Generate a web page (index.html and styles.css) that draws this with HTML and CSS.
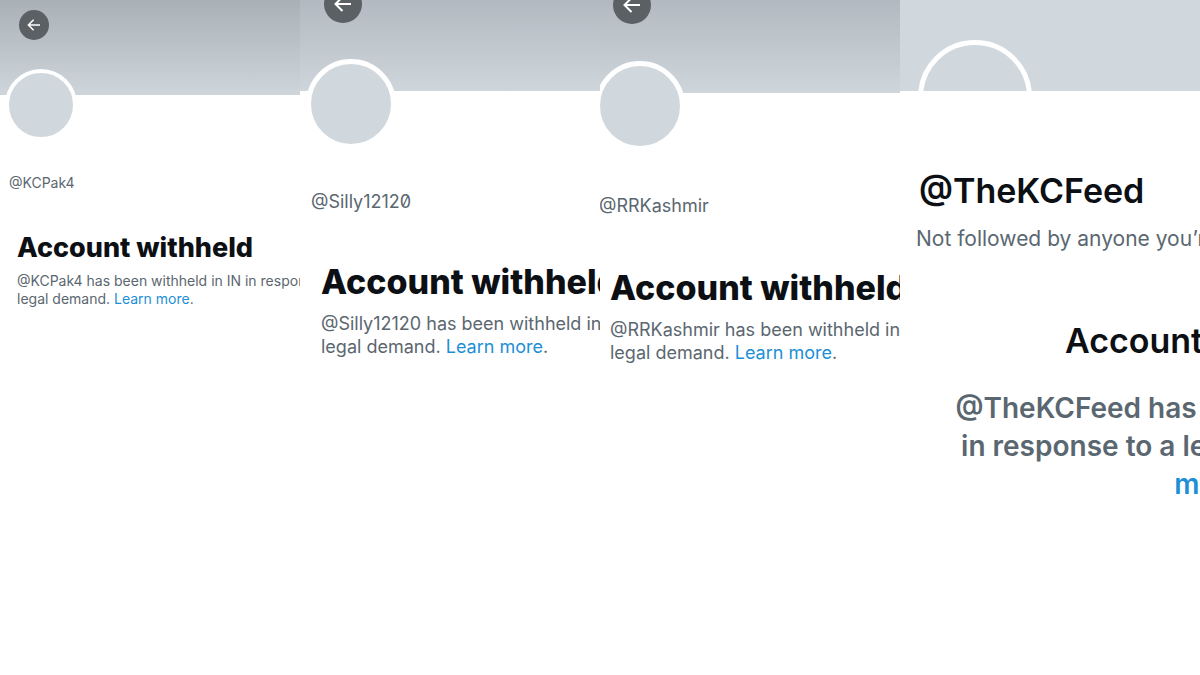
FILE: index.html
```html
<!DOCTYPE html>
<html lang="en">
<head>
  <meta charset="UTF-8">
  <meta name="viewport" content="width=device-width, initial-scale=1">
  <title>Withheld accounts</title>
  <link rel="stylesheet" href="styles.css">
</head>
<body>

<main class="profiles">
  <section class="profile small">
    <div class="banner">
      <button class="back" aria-label="Back">
        <svg viewBox="0 0 24 24"><path d="M20 12H5M11.5 5 4.5 12l7 7"/></svg>
      </button>
    </div>
    <div class="avatar"></div>
    <p class="handle">@KCPak4</p>
    <div class="notice">
      <h2>Account withheld</h2>
      <p>@KCPak4 has been withheld in IN in response to a<br>legal demand. <a href="#">Learn more</a>.</p>
    </div>
  </section>

  <section class="profile medium">
    <div class="banner">
      <button class="back" aria-label="Back">
        <svg viewBox="0 0 24 24"><path d="M20 12H5M11.5 5 4.5 12l7 7"/></svg>
      </button>
    </div>
    <div class="avatar"></div>
    <p class="handle">@Silly12120</p>
    <div class="notice">
      <h2>Account withheld</h2>
      <p>@Silly12120 has been withheld in IN in response to a<br>legal demand. <a href="#">Learn more</a>.</p>
    </div>
  </section>

  <section class="profile medium shifted">
    <div class="banner">
      <button class="back" aria-label="Back">
        <svg viewBox="0 0 24 24"><path d="M20 12H5M11.5 5 4.5 12l7 7"/></svg>
      </button>
    </div>
    <div class="avatar"></div>
    <p class="handle">@RRKashmir</p>
    <div class="notice">
      <h2>Account withheld</h2>
      <p>@RRKashmir has been withheld in IN in response to a<br>legal demand. <a href="#">Learn more</a>.</p>
    </div>
  </section>

  <section class="profile large">
    <div class="banner">
      <div class="avatar"></div>
    </div>
    <h1 class="name">@TheKCFeed</h1>
    <p class="followed">Not followed by anyone you’re following</p>
    <div class="notice">
      <h2>Account withheld</h2>
      <p>@TheKCFeed has been withheld in IN<br>in response to a legal demand. <a href="#">Learn<br>more</a></p>
    </div>
  </section>
</main>

</body>
</html>
```
FILE: styles.css
```css
* {
  box-sizing: border-box;
}
body {
  margin: 0;
  background: #fff;
  color: #0c1014;
  font-family: Inter, "Liberation Sans", sans-serif;
}
h1, h2, p {
  margin: 0;
}
a {
  color: #1d8fd6;
  text-decoration: none;
}
.profiles {
  display: grid;
  grid-template-columns: repeat(4, minmax(0, 1fr));
  min-height: 100vh;
}
.profile {
  overflow: hidden;
  white-space: nowrap;
}
.banner {
  position: relative;
  height: 91px;
  background: linear-gradient(#b2b9c0, #ced6dc);
}
.back {
  position: absolute;
  top: -15px;
  left: 24px;
  display: flex;
  align-items: center;
  justify-content: center;
  width: 38px;
  height: 38px;
  padding: 0;
  border: none;
  border-radius: 50%;
  background: #5a6064;
  cursor: pointer;
}
.back svg {
  width: 24px;
  height: 24px;
  fill: none;
  stroke: #fff;
  stroke-width: 2;
}
.avatar {
  position: relative;
  width: 90px;
  height: 90px;
  margin: -32px 0 0 6px;
  border: 5px solid #fff;
  border-radius: 50%;
  background: #d0d8de;
}
.handle, .notice p, .followed {
  color: #5b6770;
}
.handle {
  font-feature-settings: "zero";
}

/* first account */
.small .banner {
  height: 95px;
  background: linear-gradient(#a9b0b6, #ced6dc);
}
.small .back {
  top: 10px;
  left: 19px;
  width: 30px;
  height: 30px;
}
.small .back svg {
  width: 18px;
  height: 18px;
}
.small .avatar {
  width: 72px;
  height: 72px;
  margin: -26px 0 0 5px;
  border-width: 4px;
}
.small .handle {
  margin: 32px 0 0 9px;
  font-size: 14px;
  line-height: 20px;
}
.small .notice {
  margin: 38px 0 0 17px;
}
.small h2 {
  font-size: 27px;
  font-weight: 800;
  line-height: 34px;
}
.small .notice p {
  margin-top: 7px;
  font-size: 14px;
  line-height: 18px;
}

/* second and third accounts */
.medium .handle {
  margin: 41px 0 0 11px;
  font-size: 18px;
  line-height: 24px;
}
.medium .notice {
  margin: 47px 0 0 21px;
}
.medium h2 {
  font-size: 34px;
  font-weight: 800;
  line-height: 42px;
}
.medium .notice p {
  margin-top: 9px;
  font-size: 18px;
  line-height: 23px;
}
.shifted .banner {
  height: 93px;
}
.shifted .back {
  top: -14px;
  left: 13px;
}
.shifted .avatar {
  margin-left: -5px;
}
.shifted .handle {
  margin: 43px 0 0 -1px;
}
.shifted .notice {
  margin: 49px 0 0 10px;
}

/* last account, cropped from a closer view */
.large .banner {
  overflow: hidden;
  padding-top: 40px;
  background: #d0d8de;
}
.large .avatar {
  width: 114px;
  height: 114px;
  margin: 0 0 0 18px;
}
.large .name {
  margin: 78px 0 0 19px;
  font-size: 34px;
  font-weight: 600;
  line-height: 44px;
}
.large .followed {
  margin: 12px 0 0 16px;
  font-size: 21px;
  line-height: 28px;
}
.large .notice {
  width: 618px;
  margin-top: 66px;
  text-align: center;
}
.large h2 {
  font-size: 34px;
  font-weight: 600;
  line-height: 44px;
}
.large .notice p {
  margin-top: 26px;
  font-size: 28px;
  font-weight: 600;
  line-height: 38px;
}
```
